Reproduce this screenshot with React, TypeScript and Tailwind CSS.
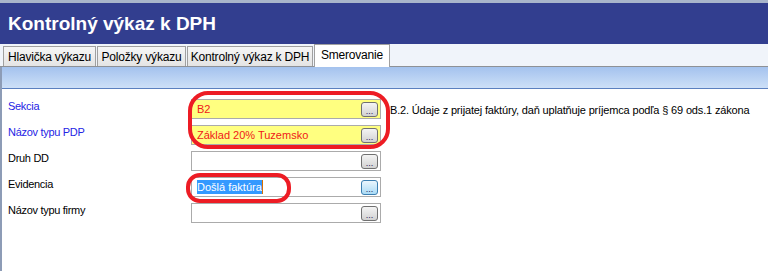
import React from "react";

const tabs = [
  { label: "Hlavička výkazu", w: "w-[93px]" },
  { label: "Položky výkazu", w: "w-[89px]" },
  { label: "Kontrolný výkaz k DPH", w: "w-[126px]" },
];

function Dots({ hot }: { hot?: boolean }) {
  return (
    <div
      className={
        "flex h-[15px] w-[17px] items-end justify-center rounded-[3px] border pb-[1px] text-[9px] leading-[8px] " +
        (hot
          ? "border-[#3C7FB1] bg-gradient-to-b from-[#EAF6FD] to-[#A9DAF5] text-[#1a1a60]"
          : "border-[#707070] bg-gradient-to-b from-[#F4F4F4] to-[#D2D2D2] text-[#2a2060]")
      }
    >
      ...
    </div>
  );
}

function Field({
  children,
  yellow,
  hot,
}: {
  children?: React.ReactNode;
  yellow?: boolean;
  hot?: boolean;
}) {
  return (
    <div
      className={
        "flex h-[20px] w-[190px] items-center justify-between border border-[#ABABAB] pl-[5px] pr-[2px] " +
        (yellow ? "bg-[#FFFF80]" : "bg-white")
      }
    >
      <div className="flex items-center text-[11px] leading-[14px]">{children}</div>
      <Dots hot={hot} />
    </div>
  );
}

function Row({
  label,
  blue,
  children,
  note,
}: {
  label: string;
  blue?: boolean;
  children: React.ReactNode;
  note?: string;
}) {
  return (
    <div className="flex h-[20px] items-start">
      <div
        className={
          "w-[189px] pl-[6px] pt-[1px] text-[11px] leading-[13px] tracking-[-0.3px] " +
          (blue ? "text-[#2424E4]" : "text-black")
        }
      >
        {label}
      </div>
      {children}
      {note && (
        <div className="self-center pl-[9px] pt-[3px] text-[11px] leading-[13px] tracking-[-0.16px] text-black">
          {note}
        </div>
      )}
    </div>
  );
}

export default function App() {
  return (
    <div className="relative flex h-[271px] w-[768px] flex-col overflow-hidden bg-white font-['Liberation_Sans',Arial,sans-serif]">
      <div className="h-[3px] bg-[#A9B5CB]" />
      <div className="flex h-[41px] items-center bg-[#323E8F] pl-[8px] pt-[1px] text-[19px] font-bold text-white">
        Kontrolný výkaz k DPH
      </div>

      {/* tabs */}
      <div className="flex h-[23px] items-end gap-[1px] border-b border-[#8E9196] bg-[#F0F4FA] pl-[3px]">
        {tabs.map((t) => (
          <div
            key={t.label}
            className={
              t.w +
              " flex h-[20px] items-center justify-center border border-b-0 border-[#A0A0A0] bg-gradient-to-b from-[#F6F6F6] to-[#E4E4E4] text-[12px] tracking-[-0.2px] text-black"
            }
          >
            {t.label}
          </div>
        ))}
        <div className="-mb-[1px] flex h-[23px] w-[76px] items-center justify-center border border-b-0 border-[#A0A0A0] bg-white pb-[2px] text-[12px] tracking-[-0.2px] text-black">
          Smerovanie
        </div>
      </div>

      <div className="flex flex-1 flex-col border-l-2 border-[#8D9CB6]">
        <div className="h-[22px] border-b border-[#5B80BF] bg-gradient-to-b from-[#A4C2EE] to-[#CDE0F7]" />

        {/* form */}
        <div className="flex flex-col gap-[6px] pt-[10px]">
          <Row
            label="Sekcia"
            blue
            note="B.2. Údaje z prijatej faktúry, daň uplatňuje príjemca podľa § 69 ods.1 zákona"
          >
            <Field yellow>
              <span className="text-[#F01818]">B2</span>
            </Field>
          </Row>
          <Row label="Názov typu PDP" blue>
            <Field yellow>
              <span className="text-[#F01818]">Základ 20% Tuzemsko</span>
            </Field>
          </Row>
          <Row label="Druh DD">
            <Field />
          </Row>
          <Row label="Evidencia">
            <Field hot>
              <span className="bg-[#3399FF] text-white">Došlá faktúra</span>
              <span className="h-[14px] w-[1px] bg-[#D87000]" />
            </Field>
          </Row>
          <Row label="Názov typu firmy">
            <Field />
          </Row>
        </div>
      </div>

      {/* red annotation marks */}
      <div className="pointer-events-none absolute left-[188px] top-[91px] h-[58px] w-[202px] rounded-[20px] border-[4px] border-[#ED1C24]" />
      <div className="pointer-events-none absolute left-[186px] top-[173px] h-[30px] w-[105px] rounded-[14px] border-[4px] border-[#ED1C24]" />
    </div>
  );
}
